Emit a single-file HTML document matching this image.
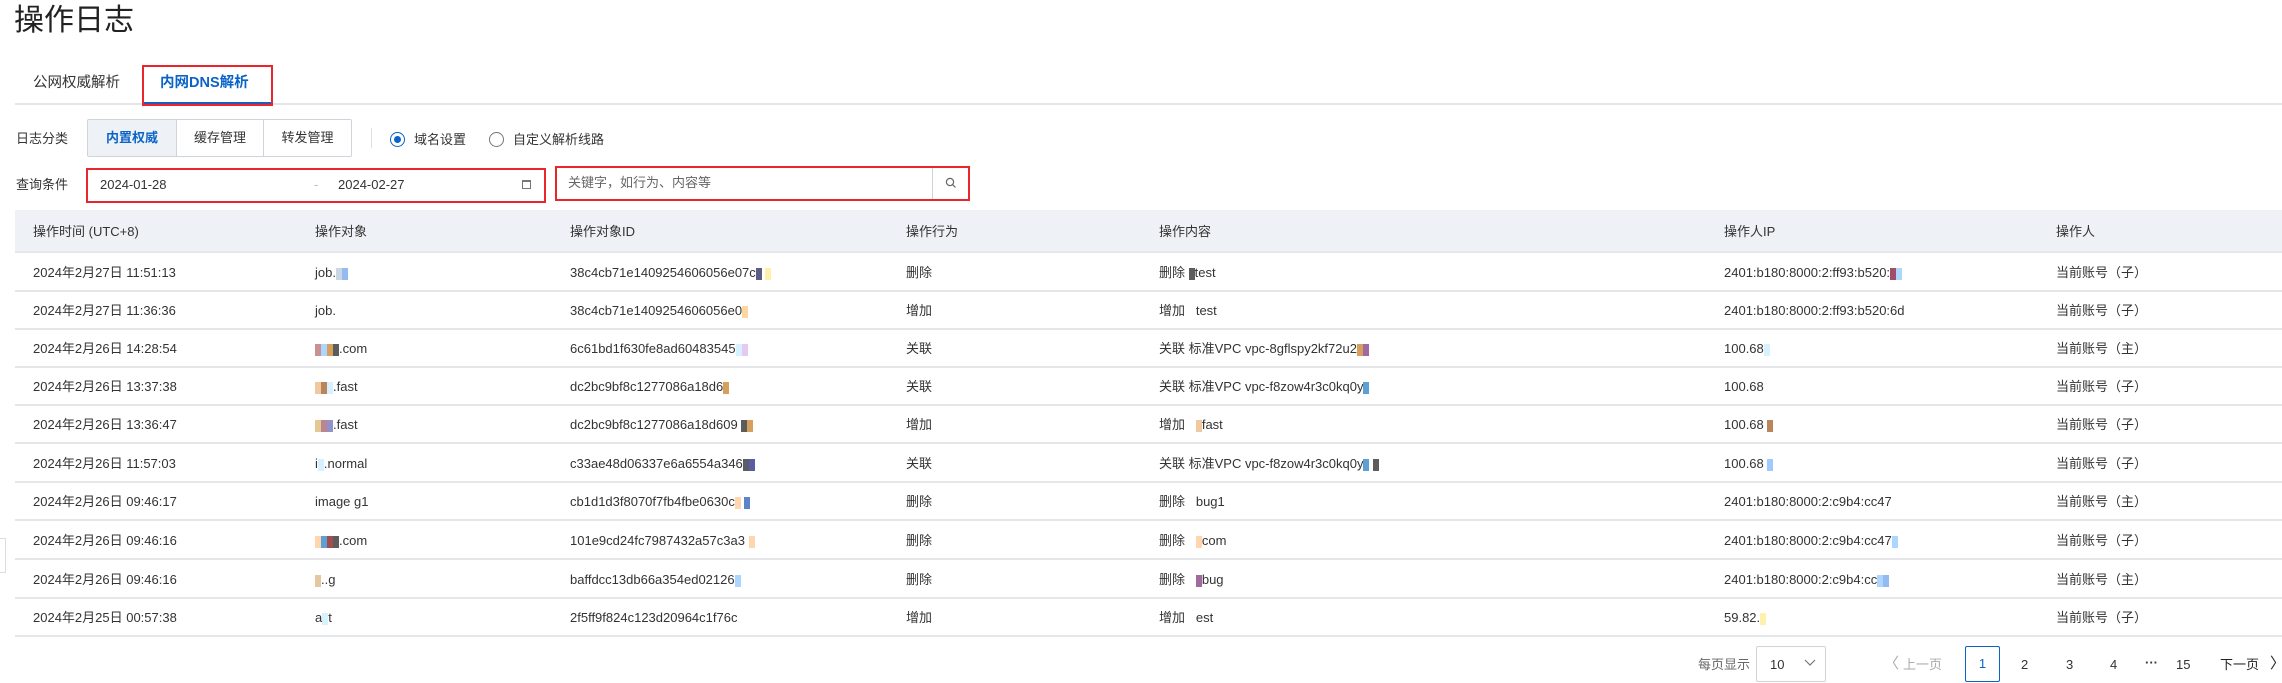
<!DOCTYPE html>
<html><head><meta charset="utf-8"><style>
*{box-sizing:border-box;margin:0;padding:0}
body{width:2282px;height:683px;background:#fff;font-family:"Liberation Sans","Noto Sans CJK SC",sans-serif;color:#333;position:relative;overflow:hidden;font-size:13px}
.a{position:absolute;white-space:nowrap}
.row{position:absolute;left:15px;width:2267px;height:38px;border-bottom:2px solid #e4e6ea}
.c{position:absolute;top:0;line-height:38px;font-size:13px;color:#333}
.pix{display:inline-block;width:6px;height:12px;vertical-align:middle;opacity:.8}
</style></head><body>
<div class="a" style="left:14px;top:3px;font-size:30px;line-height:36px;color:#222">操作日志</div>

<div class="a" style="left:15px;top:103px;width:2267px;height:2px;background:#e4e6ea"></div>
<div class="a" style="left:33px;top:73px;font-size:14.5px;line-height:20px;color:#333">公网权威解析</div>
<div class="a" style="left:142px;top:65px;width:131px;height:41px;border:2px solid #e8262b"></div>
<div class="a" style="left:144px;top:102px;width:127px;height:2px;background:#1a5fc0"></div>
<div class="a" style="left:160px;top:73px;font-size:14.5px;line-height:20px;color:#0a63c9;font-weight:bold">内网DNS解析</div>

<div class="a" style="left:16px;top:130px;line-height:18px">日志分类</div>
<div class="a" style="left:87px;top:119px;width:265px;height:38px;border:1px solid #cfd4db;border-radius:2px;overflow:hidden;display:flex">
<div style="width:89px;background:#eef1f5;color:#0a63c9;font-weight:bold;text-align:center;line-height:36px;border-right:1px solid #cfd4db">内置权威</div>
<div style="width:87px;text-align:center;line-height:36px;border-right:1px solid #cfd4db">缓存管理</div>
<div style="flex:1;text-align:center;line-height:36px">转发管理</div></div>
<div class="a" style="left:371px;top:128px;width:1px;height:20px;background:#dcdfe4"></div>
<div class="a" style="left:390px;top:132px;width:15px;height:15px;border:1px solid #0a63c9;border-radius:50%"><div style="margin:3px;width:7px;height:7px;border-radius:50%;background:#0a63c9"></div></div>
<div class="a" style="left:414px;top:131px;line-height:18px">域名设置</div>
<div class="a" style="left:489px;top:132px;width:15px;height:15px;border:1px solid #777;border-radius:50%"></div>
<div class="a" style="left:513px;top:131px;line-height:18px">自定义解析线路</div>

<div class="a" style="left:16px;top:176px;line-height:18px">查询条件</div>
<div class="a" style="left:86px;top:168px;width:460px;height:35px;border:2px solid #e8262b"></div>
<div class="a" style="left:100px;top:176px;line-height:18px">2024-01-28</div>
<div class="a" style="left:314px;top:176px;line-height:18px;color:#bbb">-</div>
<div class="a" style="left:338px;top:176px;line-height:18px">2024-02-27</div>
<div class="a" style="left:522px;top:180px;width:9px;height:9px;border:1px solid #777;border-top-width:2px"></div>
<div class="a" style="left:555px;top:166px;width:415px;height:35px;border:2px solid #e8262b"></div>
<div class="a" style="left:932px;top:168px;width:1px;height:31px;background:#cfd4db"></div>
<div class="a" style="left:568px;top:174px;line-height:18px;color:#666">关键字，如行为、内容等</div>
<svg class="a" style="left:945px;top:177px" width="12" height="12" viewBox="0 0 12 12"><circle cx="5" cy="5" r="3.6" fill="none" stroke="#666" stroke-width="1.2"/><path d="M7.6 7.6L10.5 10.5" stroke="#666" stroke-width="1.2"/></svg>

<div class="a" style="left:15px;top:210px;width:2267px;height:43px;background:#eef1f5;border-bottom:2px solid #e4e6ea"></div>
<div class="a" style="left:33px;top:223px;line-height:18px">操作时间 (UTC+8)</div>
<div class="a" style="left:315px;top:223px;line-height:18px">操作对象</div>
<div class="a" style="left:570px;top:223px;line-height:18px">操作对象ID</div>
<div class="a" style="left:906px;top:223px;line-height:18px">操作行为</div>
<div class="a" style="left:1159px;top:223px;line-height:18px">操作内容</div>
<div class="a" style="left:1724px;top:223px;line-height:18px">操作人IP</div>
<div class="a" style="left:2056px;top:223px;line-height:18px">操作人</div>

<div class="row" style="top:254px"><span class="c" style="left:18px">2024年2月27日 11:51:13</span><span class="c" style="left:300px">job.<span class="pix" style="background:#bcd"></span><span class="pix" style="background:#7ae"></span></span><span class="c" style="left:555px">38c4cb71e1409254606056e07c<span class="pix" style="background:#336"></span> <span class="pix" style="background:#fe9"></span></span><span class="c" style="left:891px">删除</span><span class="c" style="left:1144px">删除 <span class="pix" style="background:#333"></span>test</span><span class="c" style="left:1709px">2401:b180:8000:2:ff93:b520:<span class="pix" style="background:#824"></span><span class="pix" style="background:#9cf"></span></span><span class="c" style="left:2041px">当前账号（子）</span></div>
<div class="row" style="top:292px"><span class="c" style="left:18px">2024年2月27日 11:36:36</span><span class="c" style="left:300px">job.</span><span class="c" style="left:555px">38c4cb71e1409254606056e0<span class="pix" style="background:#fc8"></span></span><span class="c" style="left:891px">增加</span><span class="c" style="left:1144px">增加 &nbsp;&nbsp;test</span><span class="c" style="left:1709px">2401:b180:8000:2:ff93:b520:6d</span><span class="c" style="left:2041px">当前账号（子）</span></div>
<div class="row" style="top:330px"><span class="c" style="left:18px">2024年2月26日 14:28:54</span><span class="c" style="left:300px"><span class="pix" style="background:#b77"></span><span class="pix" style="background:#9cf"></span><span class="pix" style="background:#c83"></span><span class="pix" style="background:#333"></span>.com</span><span class="c" style="left:555px">6c61bd1f630fe8ad60483545<span class="pix" style="background:#cef"></span><span class="pix" style="background:#dbe"></span></span><span class="c" style="left:891px">关联</span><span class="c" style="left:1144px">关联 标准VPC vpc-8gflspy2kf72u2<span class="pix" style="background:#c83"></span><span class="pix" style="background:#848"></span></span><span class="c" style="left:1709px">100.68<span class="pix" style="background:#cef"></span></span><span class="c" style="left:2041px">当前账号（主）</span></div>
<div class="row" style="top:368px"><span class="c" style="left:18px">2024年2月26日 13:37:38</span><span class="c" style="left:300px"><span class="pix" style="background:#eb8"></span><span class="pix" style="background:#a63"></span><span class="pix" style="background:#cef"></span>.fast</span><span class="c" style="left:555px">dc2bc9bf8c1277086a18d6<span class="pix" style="background:#c83"></span></span><span class="c" style="left:891px">关联</span><span class="c" style="left:1144px">关联 标准VPC vpc-f8zow4r3c0kq0y<span class="pix" style="background:#38c"></span></span><span class="c" style="left:1709px">100.68</span><span class="c" style="left:2041px">当前账号（子）</span></div>
<div class="row" style="top:406px"><span class="c" style="left:18px">2024年2月26日 13:36:47</span><span class="c" style="left:300px"><span class="pix" style="background:#db7"></span><span class="pix" style="background:#a67"></span><span class="pix" style="background:#77b"></span>.fast</span><span class="c" style="left:555px">dc2bc9bf8c1277086a18d609 <span class="pix" style="background:#333"></span><span class="pix" style="background:#c83"></span></span><span class="c" style="left:891px">增加</span><span class="c" style="left:1144px">增加 &nbsp;&nbsp;<span class="pix" style="background:#eb8"></span>fast</span><span class="c" style="left:1709px">100.68 <span class="pix" style="background:#a63"></span></span><span class="c" style="left:2041px">当前账号（子）</span></div>
<div class="row" style="top:445px"><span class="c" style="left:18px">2024年2月26日 11:57:03</span><span class="c" style="left:300px">i<span class="pix" style="background:#cef"></span>.normal</span><span class="c" style="left:555px">c33ae48d06337e6a6554a346<span class="pix" style="background:#334"></span><span class="pix" style="background:#338"></span></span><span class="c" style="left:891px">关联</span><span class="c" style="left:1144px">关联 标准VPC vpc-f8zow4r3c0kq0y<span class="pix" style="background:#38c"></span> <span class="pix" style="background:#333"></span></span><span class="c" style="left:1709px">100.68 <span class="pix" style="background:#8bf"></span></span><span class="c" style="left:2041px">当前账号（子）</span></div>
<div class="row" style="top:483px"><span class="c" style="left:18px">2024年2月26日 09:46:17</span><span class="c" style="left:300px">image g1</span><span class="c" style="left:555px">cb1d1d3f8070f7fb4fbe0630c<span class="pix" style="background:#fc9"></span> <span class="pix" style="background:#36b"></span></span><span class="c" style="left:891px">删除</span><span class="c" style="left:1144px">删除 &nbsp;&nbsp;bug1</span><span class="c" style="left:1709px">2401:b180:8000:2:c9b4:cc47</span><span class="c" style="left:2041px">当前账号（主）</span></div>
<div class="row" style="top:522px"><span class="c" style="left:18px">2024年2月26日 09:46:16</span><span class="c" style="left:300px"><span class="pix" style="background:#fc9"></span><span class="pix" style="background:#38c"></span><span class="pix" style="background:#822"></span><span class="pix" style="background:#333"></span>.com</span><span class="c" style="left:555px">101e9cd24fc7987432a57c3a3 <span class="pix" style="background:#fc9"></span></span><span class="c" style="left:891px">删除</span><span class="c" style="left:1144px">删除 &nbsp;&nbsp;<span class="pix" style="background:#fc9"></span>com</span><span class="c" style="left:1709px">2401:b180:8000:2:c9b4:cc47<span class="pix" style="background:#9cf"></span></span><span class="c" style="left:2041px">当前账号（子）</span></div>
<div class="row" style="top:561px"><span class="c" style="left:18px">2024年2月26日 09:46:16</span><span class="c" style="left:300px"><span class="pix" style="background:#db8"></span>..g</span><span class="c" style="left:555px">baffdcc13db66a354ed02126<span class="pix" style="background:#9cf"></span></span><span class="c" style="left:891px">删除</span><span class="c" style="left:1144px">删除 &nbsp;&nbsp;<span class="pix" style="background:#848"></span>bug</span><span class="c" style="left:1709px">2401:b180:8000:2:c9b4:cc<span class="pix" style="background:#9cf"></span><span class="pix" style="background:#7ae"></span></span><span class="c" style="left:2041px">当前账号（主）</span></div>
<div class="row" style="top:599px"><span class="c" style="left:18px">2024年2月25日 00:57:38</span><span class="c" style="left:300px">a<span class="pix" style="background:#cef"></span>t</span><span class="c" style="left:555px">2f5ff9f824c123d20964c1f76c</span><span class="c" style="left:891px">增加</span><span class="c" style="left:1144px">增加 &nbsp;&nbsp;est</span><span class="c" style="left:1709px">59.82.<span class="pix" style="background:#fe9"></span></span><span class="c" style="left:2041px">当前账号（子）</span></div>

<div class="a" style="left:0;top:538px;width:6px;height:35px;border:1px solid #ddd;border-left:none;background:#fff"></div>

<div class="a" style="left:1698px;top:656px;line-height:18px;color:#666">每页显示</div>
<div class="a" style="left:1756px;top:646px;width:70px;height:36px;border:1px solid #cfd4db;border-radius:2px"></div>
<div class="a" style="left:1770px;top:656px;line-height:18px">10</div>
<svg class="a" style="left:1804px;top:659px" width="12" height="8"><path d="M1 1L6 6L11 1" fill="none" stroke="#777" stroke-width="1.2"/></svg>
<div class="a" style="left:1884px;top:654px;line-height:20px;color:#aaa;font-size:15px">〈</div>
<div class="a" style="left:1903px;top:656px;line-height:18px;color:#aaa">上一页</div>
<div class="a" style="left:1965px;top:646px;width:35px;height:36px;border:1px solid #0a63c9;border-radius:2px;text-align:center;line-height:34px;color:#0a63c9">1</div>
<div class="a" style="left:2021px;top:656px;line-height:18px">2</div>
<div class="a" style="left:2066px;top:656px;line-height:18px">3</div>
<div class="a" style="left:2110px;top:656px;line-height:18px">4</div>
<div class="a" style="left:2145px;top:654px;line-height:18px;font-weight:bold">···</div>
<div class="a" style="left:2176px;top:656px;line-height:18px">15</div>
<div class="a" style="left:2220px;top:656px;line-height:18px;color:#222">下一页</div>
<div class="a" style="left:2270px;top:654px;line-height:20px;color:#222;font-size:15px">〉</div>
</body></html>
